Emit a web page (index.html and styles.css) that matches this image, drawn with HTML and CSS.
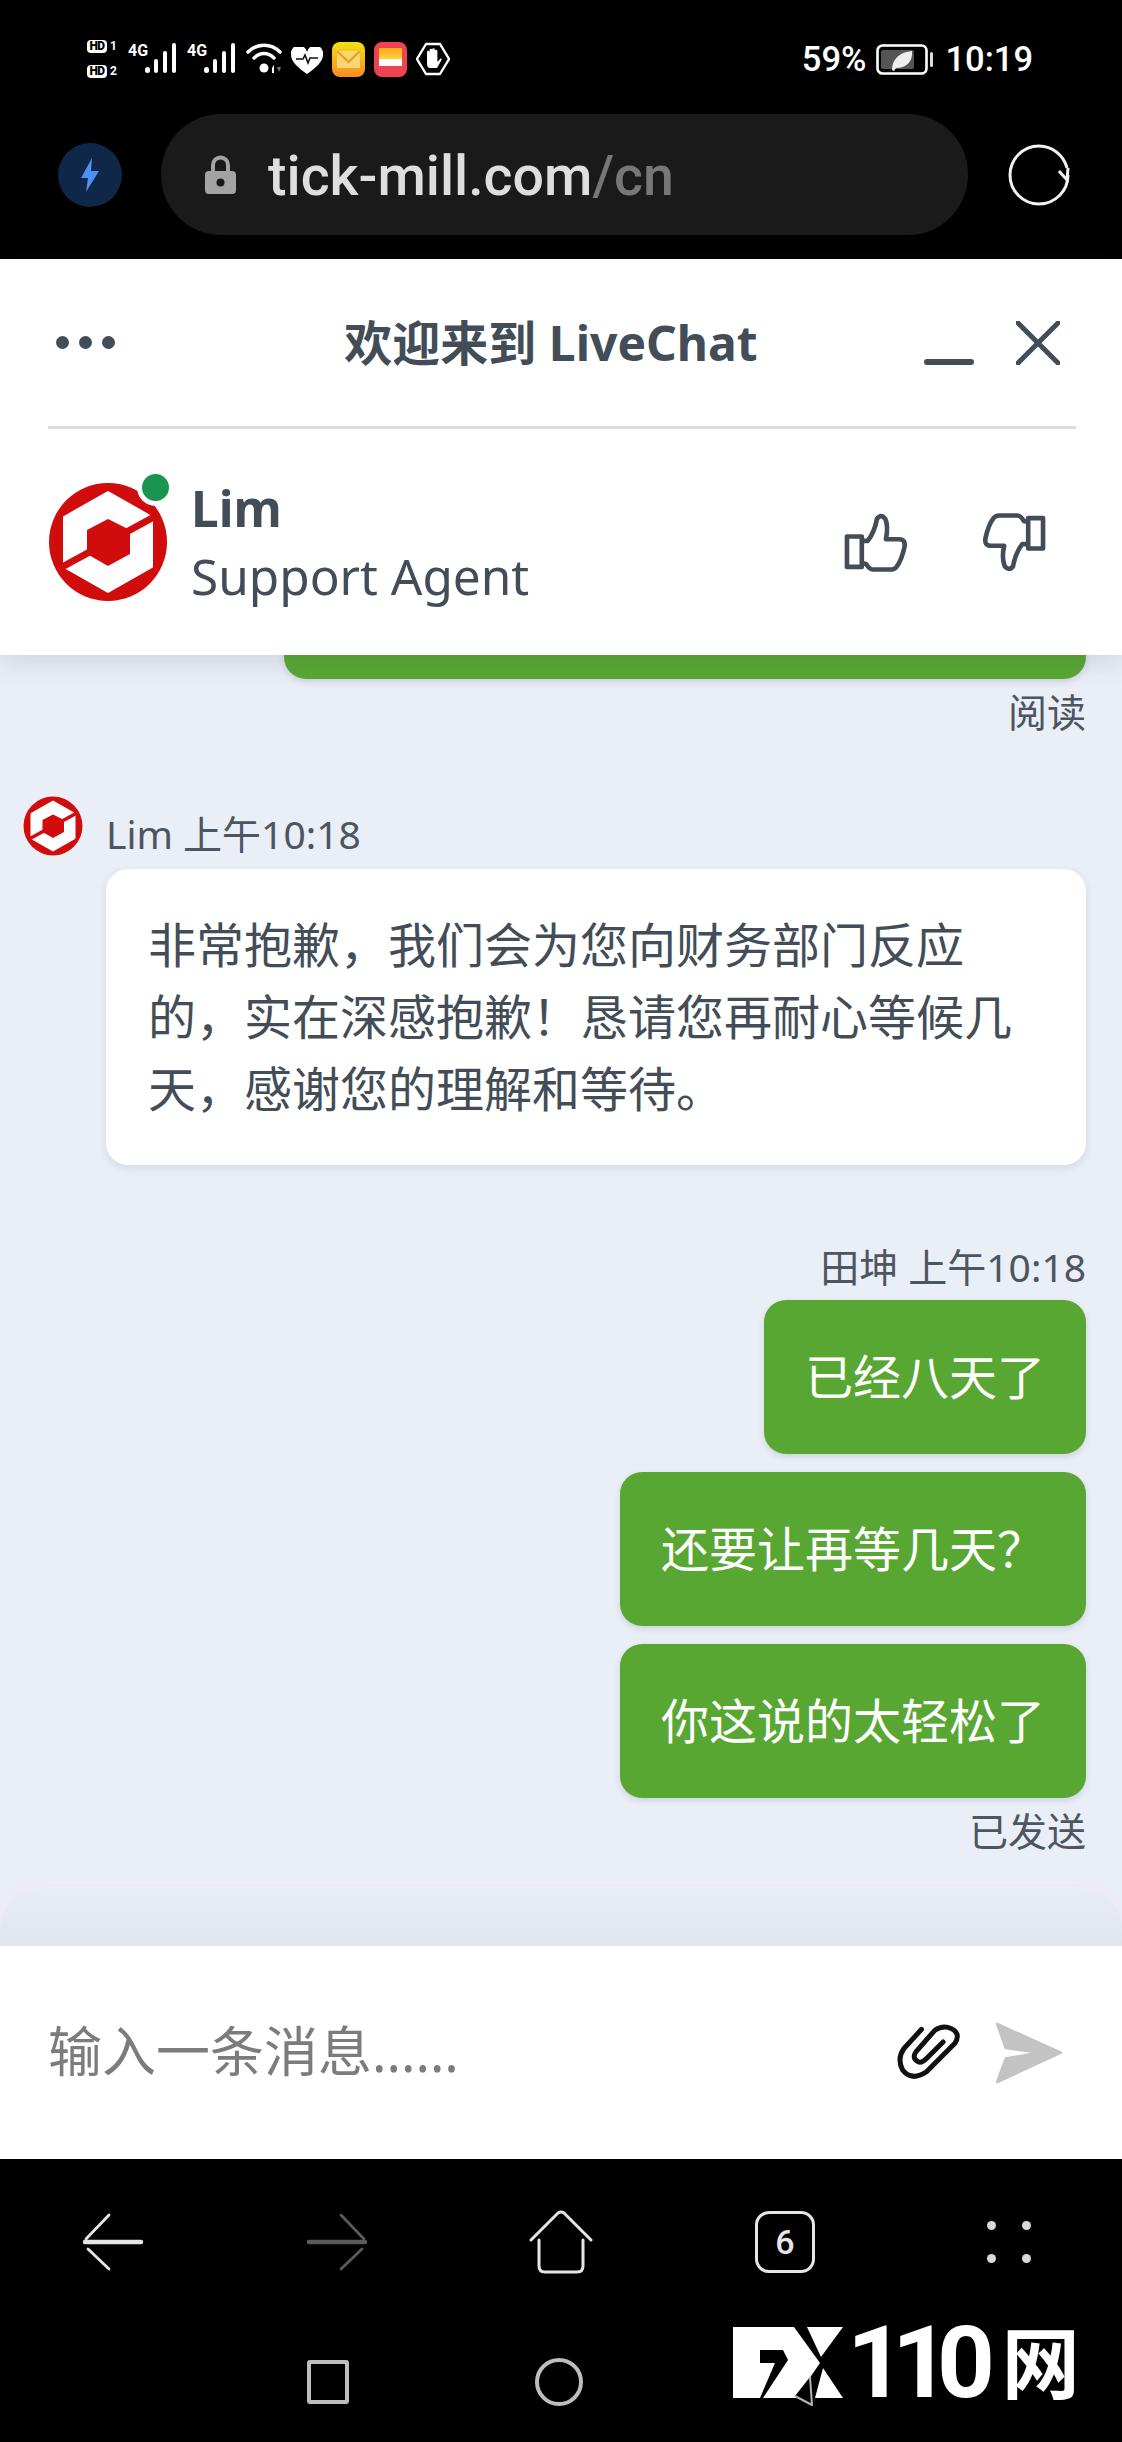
FILE: index.html
```html
<!DOCTYPE html>
<html>
	<head>
		<meta charset="utf-8" />
		<title>LiveChat</title>
		<link rel="stylesheet" href="styles.css">
	</head>
	<body>
		<svg class="defs" width="0" height="0">
			<symbol id="logo" viewBox="0 0 120 120">
				<circle cx="60" cy="60" r="59" fill="#d00c0c"/>
				<polygon points="60,10 104,35 104,85 60,110 16,85 16,35" fill="#fff" stroke="#fff" stroke-width="2" stroke-linejoin="round"/>
				<line x1="106" y1="35" x2="14" y2="85" stroke="#d00c0c" stroke-width="7"/>
				<polygon points="60,37 82,48 82,72 60,84 39,72 39,48" fill="#d00c0c"/>
			</symbol>
			<symbol id="thumb" viewBox="45 55 200 190">
				<rect x="57" y="132" width="45" height="92" fill="none" stroke="#424d57" stroke-width="14" stroke-linejoin="round"/>
				<path d="M102 145H120Q140 120 148 78Q160 62 173 78Q183 100 175 140H215Q236 140 231 165Q222 205 207 224Q200 232 190 232H135Q125 232 115 215L102 212" fill="none" stroke="#424d57" stroke-width="14" stroke-linejoin="round"/>
			</symbol>
		</svg>

		<div class="phone">
			<div class="browser-top">
				<div class="status">
					<div class="status-left">
						<div class="hd-stack">
							<span class="hd"><b>HD</b><i>1</i></span>
							<span class="hd"><b>HD</b><i>2</i></span>
						</div>
						<div class="signal">
							<span class="g4">4G</span>
							<svg width="33" height="30" viewBox="0 0 33 30"><g fill="#fff"><rect x="0" y="24" width="5" height="6" rx="2.5"/><rect x="9" y="16" width="4" height="14" rx="2"/><rect x="18" y="8" width="4" height="22" rx="2"/><rect x="27" y="0" width="4" height="30" rx="2"/></g></svg>
						</div>
						<div class="signal">
							<span class="g4">4G</span>
							<svg width="33" height="30" viewBox="0 0 33 30"><g fill="#fff"><rect x="0" y="24" width="5" height="6" rx="2.5"/><rect x="9" y="16" width="4" height="14" rx="2"/><rect x="18" y="8" width="4" height="22" rx="2"/><rect x="27" y="0" width="4" height="30" rx="2"/></g></svg>
						</div>
						<svg class="wifi" width="36" height="30" viewBox="0 0 36 30">
							<g fill="none" stroke="#fff" stroke-width="3.4" stroke-linecap="round">
								<path d="M2 9C11 0 25 0 34 9"/>
								<path d="M8 15C14 9 22 9 28 15"/>
							</g>
							<circle cx="18" cy="25" r="4.5" fill="#fff"/>
							<path d="M28 22V30H26V25Z" fill="#fff"/>
							<path d="M31 24L35 24L33 29Z" fill="#777"/>
						</svg>
						<svg class="heart" width="32" height="27" viewBox="0 0 32 27">
							<path d="M16 27C6 20 0 14 0 8A8 8 0 0 1 16 5A8 8 0 0 1 32 8C32 14 26 20 16 27Z" fill="#fff"/>
							<path d="M5 12H12L14 8L17 16L19 11H27" fill="none" stroke="#111" stroke-width="1.6"/>
						</svg>
						<div class="app app-mail">
							<svg width="23" height="17" viewBox="0 0 23 17"><path d="M0 0H23V17H0Z" fill="#f7d774"/><path d="M0 0L11.5 11L23 0" fill="none" stroke="#f29a1f" stroke-width="2"/></svg>
						</div>
						<div class="app app-huawei"><span class="app-strip"></span></div>
						<svg class="hand" width="34" height="34" viewBox="0 0 34 34">
							<polygon points="10,2 24,2 33,17 24,32 10,32 1,17" fill="#000" stroke="#fff" stroke-width="2.4" stroke-linejoin="round"/>
							<path d="M11 19V10a1.3 1.3 0 0 1 2.6 0V8a1.3 1.3 0 0 1 2.6 0V7.5a1.3 1.3 0 0 1 2.6 0V9a1.3 1.3 0 0 1 2.6 0V20L24 17C25 16 26 17 25.500 18L21 26H14C12 26 11 24 11 22Z" fill="#fff"/>
						</svg>
					</div>
					<div class="status-right">
						<span>59%</span>
						<svg class="battery" width="57" height="31" viewBox="0 0 57 31">
							<rect x="1.500" y="1.500" width="49" height="28" rx="5" fill="none" stroke="#fff" stroke-width="2.600"/>
							<rect x="5" y="6" width="33" height="19" rx="2" fill="#555"/>
							<rect x="54" y="8" width="3" height="15" rx="1.500" fill="#ddd"/>
							<path d="M16 26C16 15 24 8 36 7C37 17 31 24 20 24L18 27Z" fill="#eee"/>
						</svg>
						<span>10:19</span>
					</div>
				</div>
				<div class="urlrow">
					<div class="bolt">
						<svg width="20" height="34" viewBox="0 0 20 34"><path d="M12 0L1 20H8L6 34L19 13H11Z" fill="#4f8ff7"/></svg>
					</div>
					<div class="urlbar">
						<svg width="33" height="40" viewBox="0 0 33 40">
							<path d="M9 17V10a7.500 7.500 0 0 1 15 0V17" fill="none" stroke="#a3a3a3" stroke-width="4"/>
							<rect x="1" y="16" width="31" height="23" rx="4" fill="#a3a3a3"/>
							<circle cx="16.500" cy="27.500" r="4" fill="#1a1a1a"/>
						</svg>
						<span class="url">tick-mill.com<em>/cn</em></span>
					</div>
					<svg class="reload" width="62" height="62" viewBox="0 0 62 62">
						<path d="M31 2A29 29 0 1 0 60 31" fill="none" stroke="#f2f2f2" stroke-width="3"/>
						<path d="M31 2A29 29 0 0 1 59 24" fill="none" stroke="#f2f2f2" stroke-width="3"/>
						<path d="M51 27L59 36L60 24" fill="none" stroke="#f2f2f2" stroke-width="3"/>
					</svg>
				</div>
			</div>

			<div class="panel">
				<div class="panel-head">
					<div class="dots"><span></span><span></span><span></span></div>
					<div class="panel-title">欢迎来到 LiveChat</div>
					<div class="win-btns">
						<span class="min-btn"></span>
						<svg width="44" height="44" viewBox="0 0 44 44"><path d="M2 2L42 42M42 2L2 42" stroke="#424d57" stroke-width="5" stroke-linecap="round"/></svg>
					</div>
				</div>
				<div class="agent">
					<div class="agent-pic">
						<svg class="agent-logo" width="120" height="120"><use href="#logo"/></svg>
						<span class="online"></span>
					</div>
					<div class="agent-info">
						<div class="agent-name">Lim</div>
						<div class="agent-role">Support Agent</div>
					</div>
					<div class="rate">
						<svg width="66" height="63"><use href="#thumb"/></svg>
						<svg class="thumb-down" width="66" height="63"><use href="#thumb"/></svg>
					</div>
				</div>
			</div>

			<div class="messages">
				<div class="group mine first-group">
					<div class="bubble green old"></div>
					<div class="note">阅读</div>
				</div>
				<div class="group theirs">
					<svg class="small-logo" width="60" height="60"><use href="#logo"/></svg>
					<div class="theirs-col">
						<div class="note sender">Lim 上午10:18</div>
						<div class="bubble white">非常抱歉，我们会为您向财务部门反应的，实在深感抱歉！恳请您再耐心等候几天，感谢您的理解和等待。</div>
					</div>
				</div>
				<div class="group mine">
					<div class="note sender">田坤 上午10:18</div>
					<div class="bubble green">已经八天了</div>
					<div class="bubble green">还要让再等几天？</div>
					<div class="bubble green">你这说的太轻松了</div>
					<div class="note">已发送</div>
				</div>
				<div class="fade"></div>
			</div>

			<div class="composer">
				<div class="placeholder">输入一条消息......</div>
				<svg class="clip" width="68" height="62" viewBox="45 70 205 187">
					<path d="M125 92L72 150Q50 180 68 215Q95 250 140 220L225 135Q245 105 215 90Q190 78 165 95L108 160Q95 180 115 190Q125 195 140 180L190 130" fill="none" stroke="#111" stroke-width="15" stroke-linecap="round" stroke-linejoin="round"/>
				</svg>
				<svg width="73" height="66" viewBox="340 58 220 200"><path d="M352 70L545 157L352 246L378 175L480 157L378 143Z" fill="#c4c3c4" stroke="#c4c3c4" stroke-width="8" stroke-linejoin="round"/></svg>
			</div>

			<div class="bottom">
				<div class="tools">
					<svg width="62" height="58" viewBox="0 0 62 58"><g fill="none" stroke="#e6e6e6" stroke-linecap="round"><path d="M3 29H59" stroke-width="4.500"/><path d="M27 2L4 26" stroke-width="2.800"/><path d="M6 36L27 56" stroke-width="2.800"/></g></svg>
					<svg width="62" height="58" viewBox="0 0 62 58"><g fill="none" stroke="#5a5a5a" stroke-linecap="round"><path d="M3 29H59" stroke-width="4.500"/><path d="M35 2L58 26" stroke-width="2.800"/><path d="M56 36L35 56" stroke-width="2.800"/></g></svg>
					<svg width="64" height="64" viewBox="0 0 64 64"><g fill="none" stroke="#e6e6e6" stroke-width="3" stroke-linecap="round" stroke-linejoin="round"><path d="M2 30L29 3Q32 1 35 3L62 30"/><path d="M10 30V56Q10 62 16 62H48Q54 62 54 56V30"/></g></svg>
					<div class="tabs">6</div>
					<div class="more"><span></span><span></span><span></span><span></span></div>
				</div>
				<div class="softkeys">
					<span class="key-square"></span>
					<span class="key-circle"></span>
					<span class="key-back"></span>
				</div>
				<div class="watermark">
					<svg class="fx-mark" width="110" height="80" viewBox="0 0 110 80">
						<polygon points="0,0 61,0 87,36 63,71 0,71" fill="#fff"/>
						<polygon points="27,23 50,23 55,33 30,71 27,71 42,36 27,36" fill="#000"/>
						<polygon points="74,0 110,0 88,30" fill="#fff"/>
						<polygon points="90,41 110,71 82,71" fill="#fff"/>
						<path d="M77 50L79 78L62 69" fill="#000" stroke="#b5b5b5" stroke-width="2" stroke-linejoin="round"/>
					</svg>
					<span class="wm-num">110</span>
					<span class="wm-cn">网</span>
				</div>
			</div>
		</div>
	</body>
</html>
```

FILE: styles.css
```css
*{
	margin: 0;
	padding: 0;
	box-sizing: border-box;
}

body{
	background: #000;
	font-family: "Noto Sans", "Noto Sans CJK SC", sans-serif;
	color: #424d57;
}

svg{
	display: block;
	flex: none;
}

.defs{
	position: absolute;
}

.phone{
	width: 1122px;
	height: 2442px;
	display: flex;
	flex-direction: column;
	overflow: hidden;
}

/* browser chrome */
.browser-top{
	height: 259px;
	background: #000;
	color: #fff;
	flex: none;
}

.status{
	height: 114px;
	padding: 40px 89px 0 87px;
	display: flex;
	justify-content: space-between;
	align-items: flex-start;
}

.status-left{
	display: flex;
	align-items: flex-start;
	gap: 9px;
}

.hd-stack{
	width: 32px;
	height: 38px;
	display: flex;
	flex-direction: column;
	justify-content: space-between;
}

.hd{
	display: flex;
	gap: 3px;
	align-items: center;
	height: 13px;
	font-family: "Roboto", sans-serif;
	font-size: 12px;
	line-height: 13px;
}

.hd b{
	width: 20px;
	background: #fff;
	color: #000;
	border-radius: 4px;
	text-align: center;
	font-weight: 900;
	letter-spacing: -.5px;
}

.hd i{
	font-style: normal;
	font-weight: 700;
	font-size: 12px;
}

.signal{
	display: flex;
	width: 50px;
	margin-top: 3px;
	align-items: flex-end;
}

.g4{
	width: 17px;
	height: 30px;
	font-family: "Liberation Sans Narrow", "Roboto", sans-serif;
	font-weight: 700;
	font-size: 16px;
	line-height: 15px;
}

.wifi{
	margin-top: 3px;
}

.heart{
	margin-top: 7px;
}

.app{
	width: 33px;
	height: 35px;
	margin-top: 2px;
	border-radius: 8px;
	display: flex;
	align-items: center;
	justify-content: center;
}

.app-mail{
	background: linear-gradient(#f1e118, #fb8a1f);
}

.app-huawei{
	background: #ee4350;
}

.app-strip{
	width: 23px;
	height: 24px;
	background: linear-gradient(#f7a91b 0, #fdd23a 45%, #fff 46%, #fff 75%, #ee4350 76%);
}

.hand{
	margin-top: 2px;
}

.status-right{
	display: flex;
	align-items: center;
	gap: 10px;
	font-family: "Roboto", sans-serif;
	font-weight: 500;
	font-size: 34.500px;
	line-height: 38px;
}

.battery{
	margin-right: 2px;
}

.urlrow{
	display: flex;
	align-items: center;
	padding-left: 58px;
}

.bolt{
	width: 64px;
	height: 64px;
	border-radius: 50%;
	background: #0f2748;
	display: flex;
	align-items: center;
	justify-content: center;
}

.urlbar{
	width: 807px;
	height: 121px;
	margin-left: 39px;
	padding-left: 43px;
	border-radius: 60px;
	background: #1a1a1a;
	display: flex;
	align-items: center;
	gap: 31px;
}

.url{
	font-family: "Roboto", sans-serif;
	font-weight: 500;
	font-size: 55.500px;
	margin-top: 4px;
	color: #dedede;
}

.url em{
	font-style: normal;
	color: #777;
}

.reload{
	margin-left: 40px;
}

/* chat header */
.panel{
	height: 396px;
	flex: none;
	background: #fff;
	position: relative;
	z-index: 2;
	padding: 0 46px 0 48px;
	box-shadow: 0 6px 26px rgba(60, 70, 90, .16);
}

.panel-head{
	height: 170px;
	border-bottom: 3px solid #dcdcdc;
	display: flex;
	align-items: center;
	position: relative;
}

.dots{
	display: flex;
	gap: 10px;
	margin-left: 8px;
}

.dots span{
	width: 13px;
	height: 13px;
	border-radius: 50%;
	background: #424d57;
}

.panel-title{
	position: absolute;
	left: 0;
	right: 0;
	margin-top: 1px;
	padding-right: 22px;
	text-align: center;
	font-size: 48px;
	font-weight: 700;
	line-height: 72px;
}

.win-btns{
	margin-left: auto;
	display: flex;
	align-items: flex-start;
	gap: 42px;
	padding-right: 16px;
}

.min-btn{
	width: 50px;
	height: 6px;
	margin-top: 38px;
	border-radius: 3px;
	background: #424d57;
}

.agent{
	display: flex;
	align-items: center;
	height: 226px;
}

.agent-pic{
	position: relative;
	width: 120px;
	height: 120px;
}

.online{
	position: absolute;
	right: -1px;
	top: -8px;
	width: 27px;
	height: 27px;
	border-radius: 50%;
	background: #1a9450;
	box-shadow: 0 0 0 5px #fff;
}

.agent-info{
	margin-left: 23px;
}

.agent-name{
	font-size: 49.500px;
	font-weight: 700;
	line-height: 68px;
}

.agent-role{
	font-size: 49.500px;
	line-height: 68px;
}

.rate{
	margin-left: auto;
	display: flex;
	gap: 72px;
	padding-right: 29px;
}

.thumb-down{
	transform: rotate(180deg);
}

/* messages */
.messages{
	flex: 1;
	min-height: 0;
	background: #e9eef7;
	position: relative;
	overflow: hidden;
	display: flex;
	flex-direction: column;
	justify-content: flex-end;
	padding: 0 36px 90px 23px;
	gap: 77px;
}

.first-group{
	margin-bottom: -5px;
}

.group{
	display: flex;
	flex: none;
}

.mine{
	flex-direction: column;
	align-items: flex-end;
}

.theirs{
	align-items: flex-start;
	gap: 23px;
}

.small-logo{
	margin-top: -13px;
}

.theirs-col{
	flex: 1;
}

.note{
	font-size: 39px;
	line-height: 50px;
	color: #4d5560;
	margin-top: 8px;
}

.sender{
	margin-top: 0;
	margin-bottom: 8px;
}

.theirs .sender{
	margin-bottom: 10px;
}

.bubble{
	padding: 41px;
	font-size: 48px;
	line-height: 72px;
	border-radius: 22px;
}

.green{
	background: #59a733;
	color: #fff;
	box-shadow: 0 3px 6px rgba(60, 70, 90, .15);
}

.green + .green{
	margin-top: 18px;
}

.old{
	width: 802px;
	height: 154px;
}

.white{
	padding: 40px 42px;
	background: #fff;
	color: #424d57;
	box-shadow: 0 3px 8px rgba(60, 70, 90, .12);
}

.fade{
	position: absolute;
	left: 0;
	right: 0;
	bottom: 0;
	height: 58px;
	border-radius: 40px 40px 0 0;
	background: linear-gradient(#e8edf4, #e1e5ed);
	box-shadow: 0 -4px 8px #f3e9f6;
}

/* input */
.composer{
	height: 213px;
	flex: none;
	background: #fff;
	display: flex;
	align-items: center;
	padding: 0 56px 0 48px;
}

.placeholder{
	font-size: 54px;
	color: #7c7c7c;
	margin-right: auto;
	margin-bottom: 8px;
}

.clip{
	margin-right: 30px;
}

/* bottom bars */
.bottom{
	height: 283px;
	flex: none;
	background: #000;
	position: relative;
}

.tools{
	height: 165px;
	padding: 0 1px;
	display: grid;
	grid-template-columns: repeat(5, 1fr);
	align-items: center;
	justify-items: center;
}

.tabs{
	width: 60px;
	height: 62px;
	border: 3px solid #e6e6e6;
	border-radius: 14px;
	color: #e6e6e6;
	font-family: "Roboto", sans-serif;
	font-size: 34px;
	font-weight: 500;
	line-height: 56px;
	text-align: center;
}

.more{
	display: grid;
	grid-template-columns: 9px 9px;
	gap: 24px 26px;
}

.more span{
	width: 9px;
	height: 9px;
	border-radius: 50%;
	background: #d8d8d8;
}

.softkeys{
	display: flex;
	justify-content: center;
	align-items: center;
	gap: 186px;
	padding-top: 34px;
}

.key-square{
	width: 42px;
	height: 44px;
	border: 4px solid #bdbdbd;
	border-radius: 3px;
}

.key-circle{
	width: 48px;
	height: 48px;
	border: 4px solid #bdbdbd;
	border-radius: 50%;
}

.key-back{
	width: 46px;
	height: 46px;
}

.watermark{
	position: absolute;
	left: 733px;
	top: 168px;
	height: 80px;
	display: flex;
	align-items: flex-start;
	color: #fff;
}

.wm-num{
	margin-left: 4px;
	font-family: "Roboto", sans-serif;
	font-weight: 700;
	font-size: 101px;
	line-height: 72px;
	letter-spacing: -13px;
}

.wm-cn{
	font-weight: 700;
	font-size: 78px;
	line-height: 72px;
	margin-left: 20px;
}
```
